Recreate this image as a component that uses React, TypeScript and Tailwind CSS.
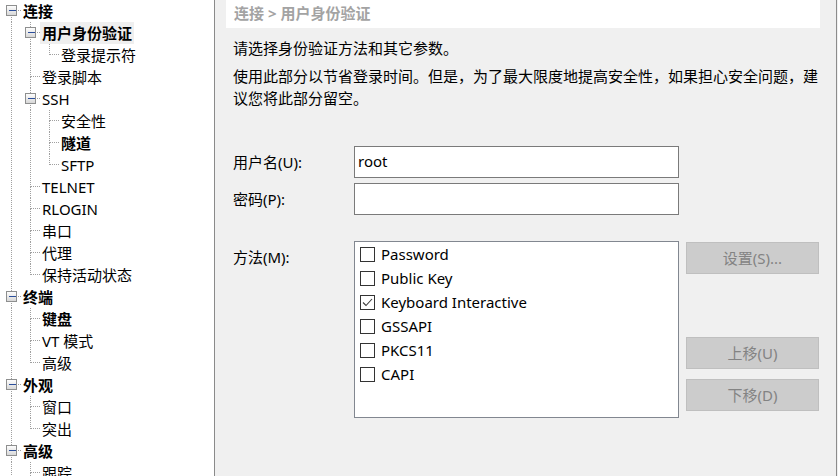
import React from "react"

type Node = { t: string; l: number; b?: boolean; x?: boolean; sel?: boolean }

const tree: Node[] = [
    { t: "连接", l: 0, b: true, x: true },
    { t: "用户身份验证", l: 1, b: true, x: true, sel: true },
    { t: "登录提示符", l: 2 },
    { t: "登录脚本", l: 1 },
    { t: "SSH", l: 1, x: true },
    { t: "安全性", l: 2 },
    { t: "隧道", l: 2, b: true },
    { t: "SFTP", l: 2 },
    { t: "TELNET", l: 1 },
    { t: "RLOGIN", l: 1 },
    { t: "串口", l: 1 },
    { t: "代理", l: 1 },
    { t: "保持活动状态", l: 1 },
    { t: "终端", l: 0, b: true, x: true },
    { t: "键盘", l: 1, b: true },
    { t: "VT 模式", l: 1 },
    { t: "高级", l: 1 },
    { t: "外观", l: 0, b: true, x: true },
    { t: "窗口", l: 1 },
    { t: "突出", l: 1 },
    { t: "高级", l: 0, b: true, x: true },
    { t: "跟踪", l: 1 },
    { t: "响铃", l: 1 },
    { t: "日志记录", l: 1 },
    { t: "文件传输", l: 0, b: true, x: true },
    { t: "X/YMODEM", l: 1 },
    { t: "ZMODEM", l: 1 },
]

// true if a later row sits on the same level before the tree climbs above it
function hasNext(i: number, level: number) {
    for (let j = i + 1; j < tree.length; j++) {
        if (tree[j].l < level) return false
        if (tree[j].l === level) return true
    }
    return false
}

const LINE = "#a0a0a0"

function Guides({ i, n }: { i: number; n: Node }) {
    const w = 21 + 19 * n.l
    const cx = (k: number) => 11 + 19 * k + 0.5
    const lines: React.ReactNode[] = []
    for (let k = 0; k < n.l; k++) {
        if (hasNext(i, k)) {
            lines.push(<line key={"v" + k} x1={cx(k)} y1={0} x2={cx(k)} y2={22} />)
        }
    }
    const c = cx(n.l)
    if (i > 0) lines.push(<line key="up" x1={c} y1={0} x2={c} y2={11} />)
    if (hasNext(i, n.l)) lines.push(<line key="down" x1={c} y1={11} x2={c} y2={22} />)
    lines.push(<line key="h" x1={c} y1={10.5} x2={w} y2={10.5} />)
    return (
        <svg width={w} height={22} className="shrink-0" shapeRendering="crispEdges">
            <defs>
                <linearGradient id={"g" + i} x1="0" y1="0" x2="0" y2="1">
                    <stop offset="0" stopColor="#ffffff" />
                    <stop offset="1" stopColor="#d6d6d6" />
                </linearGradient>
            </defs>
            <g stroke={LINE} strokeDasharray="1 1">{lines}</g>
            {n.x && (
                <g>
                    <rect x={c - 5} y={5.5} width={10} height={10} fill={`url(#g${i})`} stroke="#8e8f8f" />
                    <line x1={c - 3} y1={10.5} x2={c + 4} y2={10.5} stroke="#2b4e9b" />
                </g>
            )}
        </svg>
    )
}

function Tree() {
    return (
        <div className="w-[215px] h-full shrink-0 bg-white border-r border-[#8a8a8a] overflow-hidden">
            {tree.map((n, i) => (
                <div key={i} className="flex h-[22px] items-center">
                    <Guides i={i} n={n} />
                    <span
                        className={
                            "px-[2px] h-[22px] leading-[22px] whitespace-nowrap text-[15px] text-black " +
                            (n.b ? "font-bold " : "") +
                            (n.sel ? "bg-[#efefef]" : "")
                        }
                    >
                        {n.t}
                    </span>
                </div>
            ))}
        </div>
    )
}

function CheckRow({ label, checked }: { label: string; checked?: boolean }) {
    return (
        <div className="flex h-[24px] items-center">
            <div className="w-[15px] h-[15px] shrink-0 border border-[#333333] bg-white flex items-center justify-center">
                {checked && (
                    <svg width="13" height="13" viewBox="0 0 13 13">
                        <polyline points="2,6.5 5,9.5 11,3" fill="none" stroke="#3c3c3c" strokeWidth="1.1" />
                    </svg>
                )}
            </div>
            <span className="ml-[6px] text-[15px] leading-[22px] text-black">{label}</span>
        </div>
    )
}

function Btn({ children, className }: { children: React.ReactNode; className?: string }) {
    return (
        <div
            className={
                "h-[32px] border border-[#bfbfbf] bg-[#cccccc] text-[#838383] text-[15px] flex items-center justify-center " +
                (className ?? "")
            }
        >
            {children}
        </div>
    )
}

export default function App() {
    return (
        <div
            className="w-[838px] h-[476px] flex overflow-hidden bg-[#f0f0f0]"
            style={{ fontFamily: '"Noto Sans", "Noto Sans CJK SC", sans-serif' }}
        >
            <Tree />
            <div className="w-[622px] h-full shrink-0 bg-[#f0f0f0] border-r border-[#8c8c8c] pl-[11px] pr-[16px]">
                <div className="h-[28px] bg-white pl-[8px] flex items-center">
                    <span className="text-[15px] font-bold text-[#a3a3a3] leading-[22px] -mt-[2px]">连接 &gt; 用户身份验证</span>
                </div>
                <div className="pl-[7px] text-[15px] leading-[22px] text-black">
                    <p className="mt-[9px]">请选择身份验证方法和其它参数。</p>
                    <p className="mt-[6px] whitespace-nowrap">
                        使用此部分以节省登录时间。但是，为了最大限度地提高安全性，如果担心安全问题，建
                        <br />
                        议您将此部分留空。
                    </p>

                    <div className="mt-[37px] flex items-center">
                        <span className="w-[121px] shrink-0">用户名(U):</span>
                        <div className="w-[325px] shrink-0 h-[32px] border border-[#7a7a7a] bg-white pl-[3px] flex items-center">
                            <span className="-mt-[3px]">root</span>
                        </div>
                    </div>
                    <div className="mt-[5px] flex items-center">
                        <span className="w-[121px] shrink-0">密码(P):</span>
                        <div className="w-[325px] shrink-0 h-[32px] border border-[#7a7a7a] bg-white" />
                    </div>

                    <div className="mt-[26px] flex items-start">
                        <span className="w-[121px] shrink-0 pt-[5px]">方法(M):</span>
                        <div className="w-[325px] shrink-0 h-[177px] border border-[#828790] bg-white pt-0 pl-[5px]">
                            <CheckRow label="Password" />
                            <CheckRow label="Public Key" />
                            <CheckRow label="Keyboard Interactive" checked />
                            <CheckRow label="GSSAPI" />
                            <CheckRow label="PKCS11" />
                            <CheckRow label="CAPI" />
                        </div>
                        <div className="ml-[7px] w-[133px] shrink-0 flex flex-col">
                            <Btn className="mt-[1px]">设置(S)...</Btn>
                            <Btn className="mt-[63px]">上移(U)</Btn>
                            <Btn className="mt-[10px]">下移(D)</Btn>
                        </div>
                    </div>
                </div>
            </div>
        </div>
    )
}
